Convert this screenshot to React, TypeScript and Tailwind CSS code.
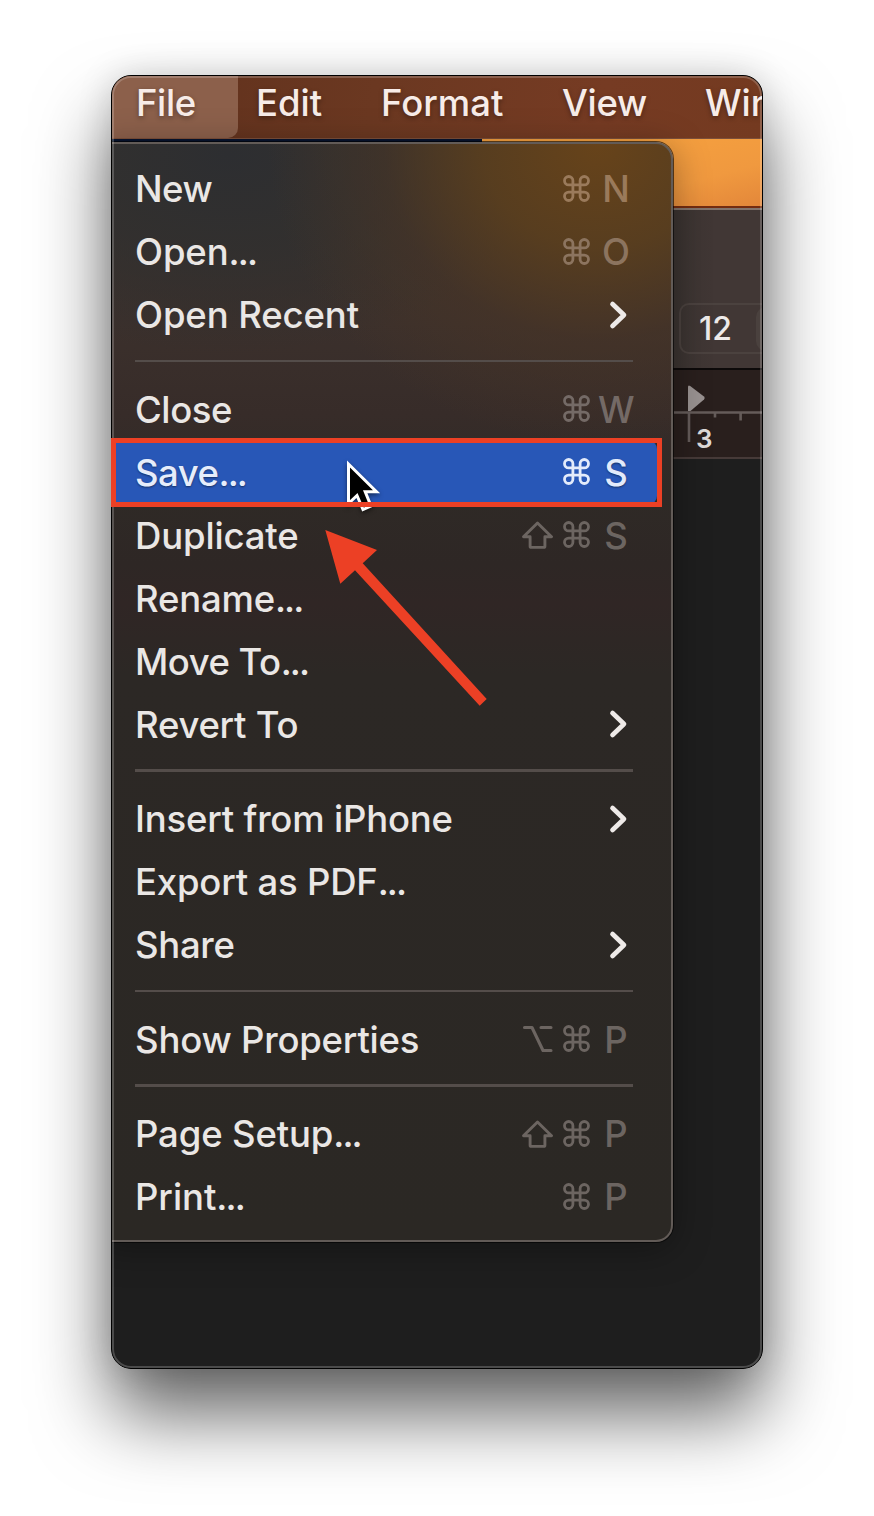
import React from "react";

type Modifier = "shift" | "option" | "command";

interface MenuItem {
  label: string;
  tracking: string;
  ellipsis?: boolean;
  modifiers?: Modifier[];
  keyName?: string;
  submenu?: boolean;
  active?: boolean;
  dim?: string;
}

const groups: MenuItem[][] = [
  [
    { label: "New", tracking: "tracking-[-0.5px]", modifiers: ["command"], keyName: "N", dim: "text-[#9a7a5b]" },
    { label: "Open", tracking: "tracking-[-0.1px]", ellipsis: true, modifiers: ["command"], keyName: "O", dim: "text-[#8c745f]" },
    { label: "Open Recent", tracking: "tracking-[-0.1px]", submenu: true },
  ],
  [
    { label: "Close", tracking: "tracking-[-0.4px]", modifiers: ["command"], keyName: "W", dim: "text-[#746a66]" },
    { label: "Save", tracking: "tracking-[-0.5px]", ellipsis: true, modifiers: ["command"], keyName: "S", active: true },
    { label: "Duplicate", tracking: "tracking-[-0.15px]", modifiers: ["shift", "command"], keyName: "S" },
    { label: "Rename", tracking: "tracking-[-0.2px]", ellipsis: true },
    { label: "Move To", tracking: "tracking-[-0.5px]", ellipsis: true },
    { label: "Revert To", tracking: "tracking-[-0.25px]", submenu: true },
  ],
  [
    { label: "Insert from iPhone", tracking: "tracking-[-0.2px]", submenu: true },
    { label: "Export as PDF", tracking: "tracking-[-0.2px]", ellipsis: true },
    { label: "Share", tracking: "tracking-[-0.3px]", submenu: true },
  ],
  [{ label: "Show Properties", tracking: "tracking-[-0.2px]", modifiers: ["option", "command"], keyName: "P" }],
  [
    { label: "Page Setup", tracking: "tracking-[-0.15px]", ellipsis: true, modifiers: ["shift", "command"], keyName: "P" },
    { label: "Print", tracking: "tracking-[-0.05px]", ellipsis: true, modifiers: ["command"], keyName: "P" },
  ],
];

function CommandIcon() {
  return (
    <svg className="h-7 w-7" viewBox="0 0 28 28" fill="none" stroke="currentColor" strokeWidth="2.800">
      <path d="M9.900 9.900H5.700A4.200 4.200 0 1 1 9.900 5.700V21.300A4.200 4.200 0 1 1 5.700 17.100H21.300A4.200 4.200 0 1 1 17.100 21.300V5.700A4.200 4.200 0 1 1 21.300 9.900Z" />
    </svg>
  );
}

function ShiftIcon() {
  return (
    <svg className="h-7 w-8" viewBox="0.500 0 32 28" fill="none" stroke="currentColor" strokeWidth="2.900" strokeLinejoin="round">
      <path d="M16 2L30 15.800H23.400V25.200Q23.400 26.400 22.200 26.400H9.800Q8.600 26.400 8.600 25.200V15.800H2Z" />
    </svg>
  );
}

function OptionIcon() {
  return (
    <svg className="h-7 w-8" viewBox="0.500 0 32 28" fill="none" stroke="currentColor" strokeWidth="3.100" strokeLinecap="round" strokeLinejoin="round">
      <path d="M3 2.500H10.500L21.500 25.500H29.500M19.500 2.500H29.500" />
    </svg>
  );
}

const icons: Record<Modifier, React.ReactElement> = {
  shift: <ShiftIcon />,
  option: <OptionIcon />,
  command: <CommandIcon />,
};

function Row({ item }: { item: MenuItem }) {
  const tone = item.active ? "text-[#e3ebfb]" : item.dim ?? "text-[#6c6561]";
  const box = item.active
    ? "mr-[14px] rounded-r-lg bg-[#2857b7] pr-[23px] [text-shadow:0_1px_2px_rgba(0,0,0,0.45)]"
    : "pr-[37px]";
  return (
    <li className={"flex h-[63px] items-center justify-between pl-6 " + box}>
      <span className={"whitespace-nowrap pt-[2px] " + item.tracking + (item.active ? " text-[#e6edfb]" : " text-[#eae7e5]")}>
        {item.label}
        {item.ellipsis && <span className="tracking-[-1.900px]">...</span>}
      </span>
      {item.submenu && (
        <svg className="mr-[5px] h-8 w-5 text-[#eeeae8]" viewBox="0 0 20 32" fill="none" stroke="currentColor" strokeWidth="4.700" strokeLinecap="round" strokeLinejoin="round">
          <path d="M3.500 5L15 16L3.500 27" />
        </svg>
      )}
      {item.keyName && (
        <span className={"flex items-center " + tone}>
          {item.modifiers?.map((m) => (
            <span key={m} className="mr-[9px] last-of-type:mr-[7px]">
              {icons[m]}
            </span>
          ))}
          <kbd className="w-[36px] pt-[2px] text-center font-[Inter,sans-serif]">{item.keyName}</kbd>
        </span>
      )}
    </li>
  );
}

function FileMenu() {
  return (
    <div className="absolute -left-4 top-[66px] h-[1100px] w-[577px] rounded-[17px] border-[2.500px] border-[#625b57] bg-[radial-gradient(ellipse_330px_300px_at_500px_0px,#67431a_0%,#5c3f1ddd_35%,#4a352588_65%,transparent_100%),radial-gradient(ellipse_320px_200px_at_130px_10px,#2d2e31_0%,#2f2f2fbb_50%,transparent_100%),linear-gradient(to_bottom,#39332d_0px,#3b302c_180px,#372c29_270px,#2f2a26_350px,#2e2725_420px,#302625_460px,#2c2825_530px,#2b2824_100%)] pl-[13px] pt-[13px] shadow-[0_0_0_1px_rgba(0,0,0,0.6),0_6px_36px_rgba(0,0,0,0.35)]">
      {groups.map((group, i) => (
        <ul key={i}>
          {i > 0 && (
            <li className="h-[31.500px] pl-6 pr-[38px] pt-[13.500px]">
              <div className="h-[2.500px] w-full bg-[#544d4a]" />
            </li>
          )}
          {group.map((item) => (
            <Row key={item.label} item={item} />
          ))}
        </ul>
      ))}
    </div>
  );
}

function MenuBar() {
  return (
    <nav className="flex h-[63px] shrink-0 items-center border-b border-[#7d503a] bg-[linear-gradient(100deg,#5f301c_0%,#6b3821_40%,#763b23_75%,#743a20_100%)] pb-[8px] text-[#f7ece8] [text-shadow:0_2px_5px_rgba(0,0,0,0.35)]">
      <span className="-mb-[8px] flex h-[62px] w-[126px] shrink-0 items-center rounded-br-[10px] bg-[#8c604b] pb-[8px] pl-6 tracking-[-0.400px]">File</span>
      <span className="ml-[18px] w-[125px] shrink-0">Edit</span>
      <span className="w-[181px] shrink-0">Format</span>
      <span className="w-[143px] shrink-0 tracking-[-0.300px]">View</span>
      <span className="whitespace-nowrap">Window</span>
    </nav>
  );
}

function Editor() {
  return (
    <>
      <div className="flex h-[67px] shrink-0">
        <div className="w-[370px] bg-[#07142f]" />
        <div className="flex-1 bg-[linear-gradient(165deg,#f5a03f_30%,#f0993f_70%,#e3873a_100%)]" />
      </div>
      <div className="h-[2px] shrink-0 bg-[#742c10]" />
      <div className="flex h-[160px] shrink-0 items-end border-t-[2.500px] border-[#81736c] bg-[linear-gradient(to_right,#3b3431_562px,#413735_600px)] pb-[14px] pl-[567px]">
        <div className="flex h-[51px] w-[110px] shrink-0 items-center rounded-[10px] border-2 border-[#4b423f] pl-[18px] text-[32px] text-[#edeae9]">
          <span className="w-[57px] shrink-0">12</span>
          <span className="h-11 w-10 shrink-0 rounded-[10px] bg-[#4a413e]" />
        </div>
      </div>
      <div className="h-[91px] shrink-0 border-b-[2.500px] border-t-2 border-b-[#463a38] border-t-[#0d0a0a] bg-[#291f1d] pl-[562px]">
        <svg className="h-[87px] w-[90px]" viewBox="0 0 90 87">
          <path d="M14 17Q14 14.500 16.200 16L30 26.500Q31.500 28 30 29.500L16.500 41H14Z" fill="#999291" />
          <path d="M0 42.500H90M15 42V72M41 42V47.500M66.600 42V50.500" fill="none" stroke="#655c5a" strokeWidth="2.600" />
          <text x="22" y="78" fontSize="26" fontFamily="Inter, sans-serif" fontWeight="600" fill="#dedad9">3</text>
        </svg>
      </div>
      <div className="flex-1 bg-[#1e1e1e]" />
    </>
  );
}

export default function App() {
  return (
    <div className="h-[1516px] w-[874px] bg-white pl-[111px] pt-[75px]">
      <div className="relative h-[1294px] w-[652px] rounded-[20px] shadow-[0_46px_76px_rgba(0,0,0,0.600),0_0_34px_rgba(0,0,0,0.150)]">
        <div className="relative flex h-full flex-col overflow-hidden rounded-[20px] border border-black bg-[#1e1e1e] font-[Inter,sans-serif] text-[36.500px] font-medium leading-none">
          <MenuBar />
          <Editor />
          <FileMenu />
          <div className="pointer-events-none absolute inset-0 rounded-[19px] border-2 border-white/20" />
        </div>
        <svg className="absolute left-[233px] top-[382px] h-[62px] w-[42px] drop-shadow-[0_2px_2px_rgba(0,0,0,0.5)]" viewBox="0 0 42 62">
          <path d="M4.500 7V46.500L13 38.500L19 52.500L27 49L21.200 34.700H32.500Z" fill="#000" stroke="#fff" strokeWidth="3" />
        </svg>
        <div className="absolute left-0 top-[363px] h-[69px] w-[551px] border-[5px] border-[#ec4025]" />
        <svg className="absolute left-[213px] top-[454px] h-[178px] w-[164px]" viewBox="0 0 164 178">
          <path d="M1.300 1L53 21L38.700 34.300L162.700 170L155.700 176.700L31 41.300L16.300 54.700Z" fill="#ec4025" />
        </svg>
      </div>
    </div>
  );
}
